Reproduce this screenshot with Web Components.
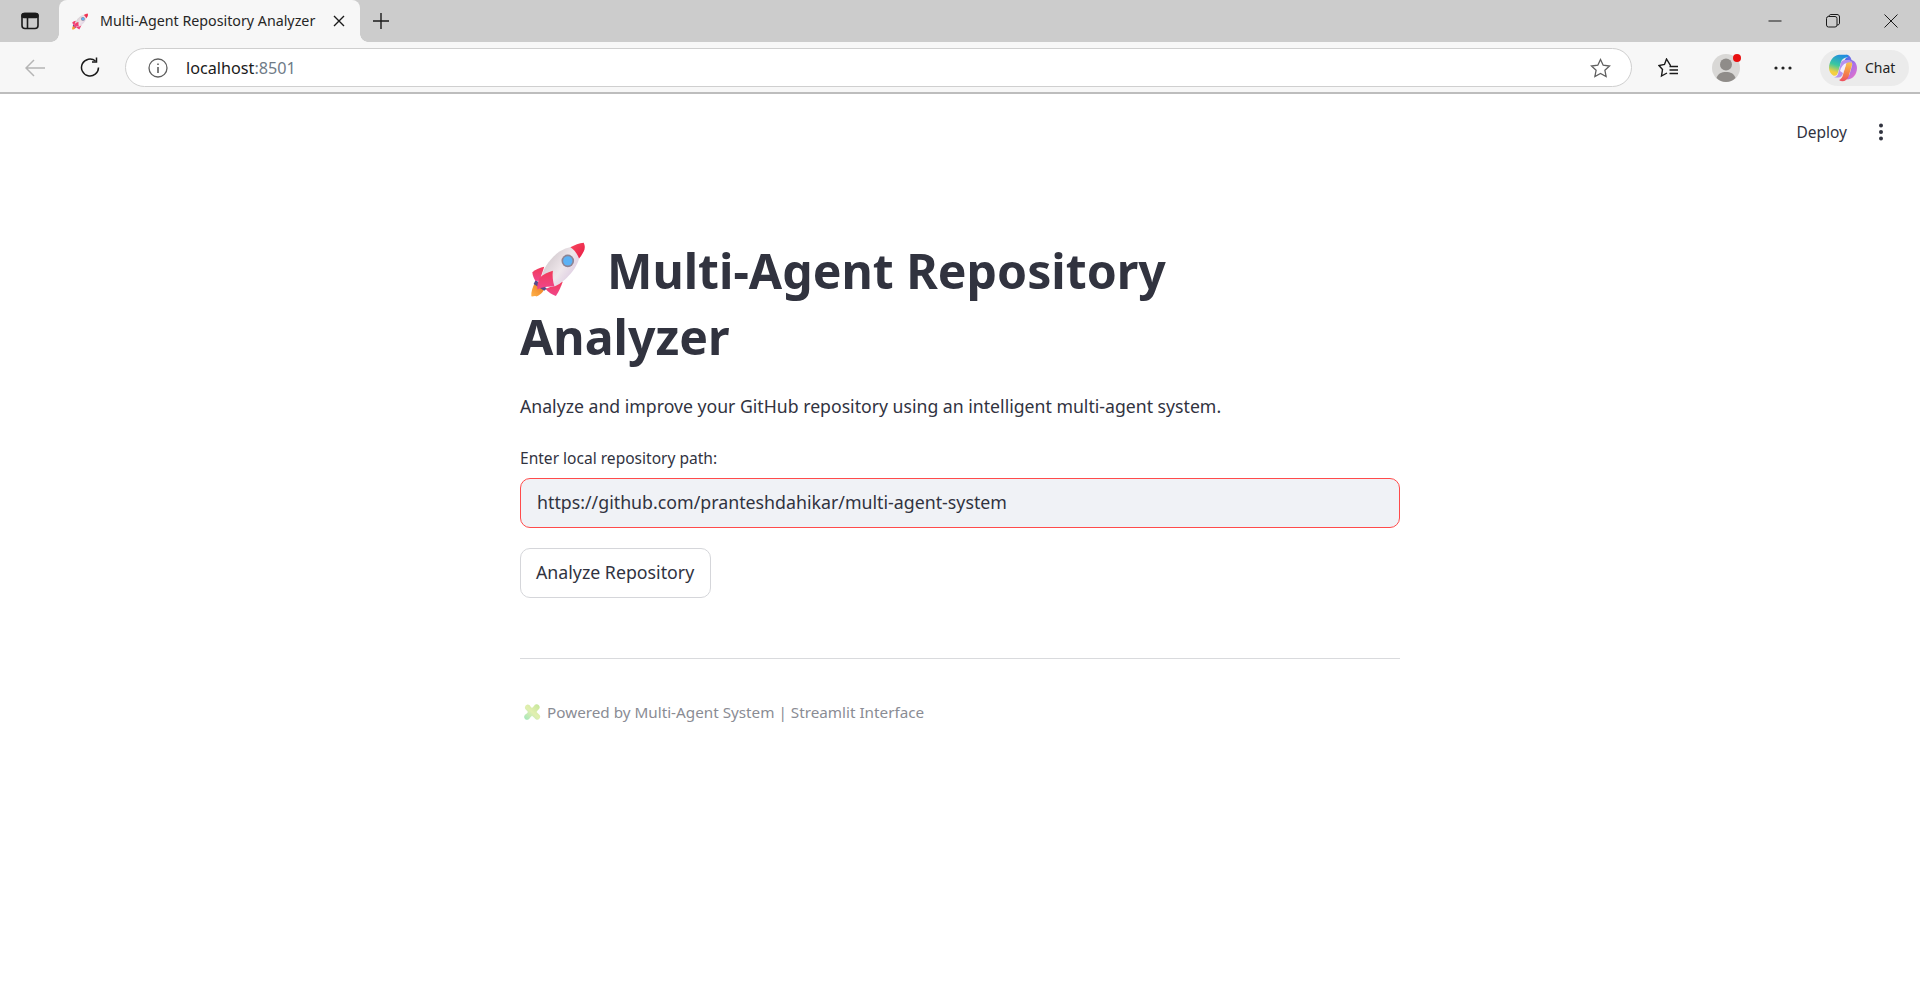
<!DOCTYPE html>
<html lang="en">
<head>
<meta charset="utf-8">
<title>Multi-Agent Repository Analyzer</title>
<style>
  html, body { margin: 0; height: 100%; background: #fff; overflow: hidden; }
  body { display: flex; flex-direction: column; font-family: "Noto Sans", "Liberation Sans", sans-serif; }
</style>
</head>
<body>
<browser-frame url-host="localhost" url-port=":8501" tab-title="Multi-Agent Repository Analyzer"></browser-frame>
<app-page>
  <app-header slot="header"></app-header>
  <app-title>Multi-Agent Repository<br>Analyzer</app-title>
  <app-text>Analyze and improve your GitHub repository using an intelligent multi-agent system.</app-text>
  <path-input label="Enter local repository path:" value="https://github.com/pranteshdahikar/multi-agent-system"></path-input>
  <app-button>Analyze Repository</app-button>
  <app-footer>Powered by Multi-Agent System | Streamlit Interface</app-footer>
</app-page>

<script>
const ROCKET = `
  <svg viewBox="20 10 175 172" width="100%" height="100%" aria-hidden="true">
    <defs>
      <linearGradient id="body" x1="0.1" y1="0.2" x2="0.9" y2="0.8">
        <stop offset="0" stop-color="#cfc6cb"/><stop offset="0.55" stop-color="#efe7eb"/><stop offset="1" stop-color="#d9c6e0"/>
      </linearGradient>
      <linearGradient id="nose" x1="0" y1="0" x2="1" y2="1">
        <stop offset="0" stop-color="#f8485f"/><stop offset="1" stop-color="#e81c44"/>
      </linearGradient>
      <linearGradient id="fin" x1="0.5" y1="0" x2="0.5" y2="1">
        <stop offset="0" stop-color="#f23a58"/><stop offset="1" stop-color="#f0468c"/>
      </linearGradient>
      <linearGradient id="flame" x1="1" y1="0" x2="0" y2="1">
        <stop offset="0" stop-color="#e8781e"/><stop offset="1" stop-color="#ffb24a"/>
      </linearGradient>
    </defs>
    <path d="M38 136 C31 148 26 164 27 177 C33 178 37 174 41 177 C47 178 50 172 55 170 C60 167 64 160 66 154 Z" fill="url(#flame)"/>
    <path d="M40 128 L74 153 L66 160 L34 140 Z" fill="#574a8c"/>
    <path d="M30 104 C40 96 54 91 66 88 L52 130 L40 131 C34 122 31 113 30 104 Z" fill="url(#fin)"/>
    <path d="M122 132 C116 148 110 163 101 176 C90 172 78 165 70 155 Z" fill="url(#fin)"/>
    <path d="M58 124 C58 96 86 60 112 42 C124 34 136 30 146 28 C158 36 166 48 171 62 C166 90 130 132 100 146 C92 149 82 150 76 148 Z" fill="url(#body)"/>
    <path d="M145 29 C157 22 172 16 185 15 C190 24 189 34 185 42 C181 50 176 57 171 63 C166 49 157 37 145 29 Z" fill="url(#nose)"/>
    <circle cx="137" cy="70" r="19" fill="#8d8494"/>
    <circle cx="137" cy="70" r="14" fill="#5cb2f5"/>
    <path d="M92 100 C78 104 62 112 52 121 C47 132 44 144 45 156 C62 148 80 146 97 148 C92 132 90 116 92 100 Z" fill="url(#fin)"/>
  </svg>`;

class BrowserFrame extends HTMLElement {
  constructor() {
    super();
    this.attachShadow({ mode: "open" });
  }
  connectedCallback() {
    this.shadowRoot.innerHTML = `
      <style>
        :host { display: block; flex: none; font-family: "Noto Sans", "Open Sans", sans-serif; color: #1f1f1f; }
        .strip { height: 42px; background: #cccccc; display: flex; align-items: stretch; }
        .side { width: 59px; display: flex; align-items: center; justify-content: center; box-sizing: border-box; }
        .tab { width: 301px; background: #f7f7f7; border-radius: 8px 8px 0 0; display: flex; align-items: center; position: relative; padding: 0 15px 0 12px; box-sizing: border-box; }
        .tab::before, .tab::after { content: ""; position: absolute; bottom: 0; width: 8px; height: 8px; background: radial-gradient(circle at 0 0, #cccccc 7.5px, #f7f7f7 8px); }
        .tab::before { left: -8px; }
        .tab::after { right: -8px; transform: scaleX(-1); }
        .fav { width: 18px; height: 17px; flex: none; }
        .title { margin-left: 11px; font-size: 14.25px; white-space: nowrap; flex: 1; color: #262626; position: relative; top: -1px; }
        .new { width: 42px; display: flex; align-items: center; justify-content: center; }
        .grow { flex: 1; }
        .win { display: flex; }
        .win div { width: 58px; display: flex; align-items: center; justify-content: center; }
        .bar { height: 52px; box-sizing: border-box; background: #f7f7f7; display: flex; align-items: center; border-bottom: 2px solid #bdbdbd; padding: 1px 11px 0 15px; }
        .nav { width: 40px; display: flex; align-items: center; justify-content: center; }
        .nav + .nav { margin-left: 15px; }
        .addr { flex: 1; height: 39px; margin-left: 15px; box-sizing: border-box; background: #fff; border: 1px solid #cfcfcf; border-radius: 20px; display: flex; align-items: center; padding: 0 20px 0 22px; font-size: 16.2px; }
        .host { margin-left: 18px; color: #1a1a1a; }
        .port { color: #6f7b87; flex: 1; }
        .tools { display: flex; align-items: center; margin-left: 8px; }
        .tool { width: 57.5px; display: flex; align-items: center; justify-content: center; position: relative; }
        .chat { display: flex; align-items: center; height: 36px; width: 89px; margin-left: 8px; background: #ebebeb; border-radius: 18px; box-sizing: border-box; padding-left: 9px; font-size: 14px; }
        .chat span { margin-left: 8px; }
        .dot { position: absolute; width: 8px; height: 8px; border-radius: 50%; background: #e81010; }
      </style>
      <div class="strip">
        <div class="side">
          <svg width="18" height="18" viewBox="0 0 18 18" fill="none" stroke="#1a1a1a" stroke-width="1.6"><rect x="1" y="1.5" width="16" height="15" rx="3"/><path d="M6.5 5.5V16.5" /><rect x="1" y="1.5" width="16" height="4" rx="2" fill="#1a1a1a"/></svg>
        </div>
        <div class="tab">
          <div class="fav">${ROCKET.replace(/id="/g, 'id="t').replace(/url\(#/g, "url(#t")}</div>
          <div class="title">${this.getAttribute("tab-title")}</div>
          <svg width="12" height="12" viewBox="0 0 12 12" stroke="#1a1a1a" stroke-width="1.4"><path d="M1 1L11 11M11 1L1 11"/></svg>
        </div>
        <div class="new">
          <svg width="18" height="18" viewBox="0 0 18 18" stroke="#1a1a1a" stroke-width="1.4"><path d="M9 1V17M1 9H17"/></svg>
        </div>
        <div class="grow"></div>
        <div class="win">
          <div><svg width="14" height="14" viewBox="0 0 14 14" stroke="#1a1a1a"><path d="M0.5 7H13.5"/></svg></div>
          <div><svg width="14" height="14" viewBox="0 0 14 14" fill="none" stroke="#1a1a1a"><rect x="0.5" y="2.5" width="10.5" height="10.5" rx="2"/><path d="M3 2.5C3 1.2 3.8 0.5 5 0.5H11C12.5 0.5 13.5 1.5 13.5 3V9C13.5 10.2 12.8 11 11 11"/></svg></div>
          <div><svg width="14" height="14" viewBox="0 0 14 14" stroke="#1a1a1a"><path d="M0.5 0.5L13.5 13.5M13.5 0.5L0.5 13.5"/></svg></div>
        </div>
      </div>
      <div class="bar">
        <div class="nav"><svg width="20" height="18" viewBox="0 0 20 18" fill="none" stroke="#b5b5b5" stroke-width="1.5"><path d="M1 9H20M9 1L1 9L9 17"/></svg></div>
        <div class="nav"><svg width="21" height="21" viewBox="0 0 21 21" fill="none" stroke="#1a1a1a" stroke-width="1.5"><path d="M18.5 10.5A8.5 8.5 0 1 1 15.5 4"/><path d="M16.5 0.5V5H12"/></svg></div>
        <div class="addr">
          <svg width="20" height="20" viewBox="0 0 20 20" fill="none" stroke="#5f5f5f" stroke-width="1.3"><circle cx="10" cy="10" r="9"/><path d="M10 9V15M10 5.5V7" stroke-width="1.6"/></svg>
          <span class="host">${this.getAttribute("url-host")}</span><span class="port">${this.getAttribute("url-port")}</span>
          <svg width="21" height="20" viewBox="0 0 21 20" fill="none" stroke="#5f5f5f" stroke-width="1.3"><path d="M10.5 1.5L13.2 7.2L19.5 8L14.9 12.3L16.1 18.5L10.5 15.4L4.9 18.5L6.1 12.3L1.5 8L7.8 7.2Z"/></svg>
        </div>
        <div class="tools">
          <div class="tool"><svg width="21" height="20" viewBox="0 0 21 20" fill="none" stroke="#1a1a1a" stroke-width="1.4"><path d="M13 7.5H12.5L8.5 1L6.5 6.5L1 7.5L4.5 11.5L3.5 18L9 15"/><path d="M11.5 8.5H20M11.5 12H20M11.5 15.5H20"/></svg></div>
          <div class="tool">
            <div style="position:relative;width:28px;height:28px">
              <svg width="28" height="28" viewBox="0 0 28 28"><circle cx="14" cy="14" r="14" fill="#d9d8d6"/><circle cx="14" cy="10.5" r="6" fill="#8f8c89"/><path d="M4.5 24C6 19.5 9.5 18 14 18S22 19.5 23.5 24C21 26.5 17.5 28 14 28S7 26.5 4.5 24Z" fill="#8f8c89"/></svg>
              <div class="dot" style="left:21px;top:0"></div>
            </div>
          </div>
          <div class="tool"><svg width="18" height="4" viewBox="0 0 18 4" fill="#222"><circle cx="2" cy="2" r="1.6"/><circle cx="9" cy="2" r="1.6"/><circle cx="16" cy="2" r="1.6"/></svg></div>
          <div class="chat">
            <svg width="28" height="28" viewBox="0 0 28 28">
              <defs>
                <linearGradient id="c1" x1="0.6" y1="0" x2="0.3" y2="1"><stop offset="0" stop-color="#1f8de0"/><stop offset="0.5" stop-color="#3ac8a0"/><stop offset="0.85" stop-color="#f5d040"/></linearGradient>
                <linearGradient id="c2" x1="0.2" y1="0" x2="0.8" y2="1"><stop offset="0" stop-color="#3a6ae8"/><stop offset="0.45" stop-color="#a070ea"/><stop offset="1" stop-color="#ea70c8"/></linearGradient>
                <linearGradient id="c3" x1="0.5" y1="0" x2="0.4" y2="1"><stop offset="0" stop-color="#f7c948"/><stop offset="0.55" stop-color="#f5813f"/><stop offset="1" stop-color="#ef4a5a"/></linearGradient>
              </defs>
              <path d="M10 0.8H18C19.8 0.8 20 2.6 18.5 3.2C15 3.6 13 5 12 8L9 18.5C8.2 21 6.5 22.5 4.2 21.5C1.6 20 0 17 0 14C0 8 4 1.3 10 0.8Z" fill="url(#c1)"/>
              <path d="M16.5 0.8C19.5 0.8 21.8 2.5 22.6 6C25.8 6.8 28 10 28 14C28 20 24.2 25 19 25.4C17.2 25.4 16.8 24 18 23.2C19.5 22.8 20.2 21.3 20.8 19.5L23.2 11C23.8 8.2 21.4 6.4 19 6.4H15.5C16.5 4.5 17.2 3.6 18.5 3.2C20 2.6 19 0.8 16.5 0.8Z" fill="url(#c2)"/>
              <path d="M14.5 8.2C16.5 9.2 17 10.6 16.5 12.5L13.5 22.5C13 24 11.5 25.4 10 26C12 27.7 15 27.7 17 26C18.6 25 19.6 23 20.2 20.5L23 11C23.3 9.6 22.9 8 22 7Z" fill="url(#c3)" opacity="0.95"/>
              <path d="M12 8.5C13 6.5 14.8 6 17 6H19C21 6 22.6 7 23 9C21 7.6 18 7.8 16.5 10.5L13.5 20.5C13 22 11.5 23.6 9.5 23.6H5C7 23.2 8.5 21.5 9 20Z" fill="#b692ee"/>
              <path d="M11 17C12 13 14 10 17.5 9L16.5 12 14 19Z" fill="#fff" opacity="0.85"/>
            </svg>
            <span>Chat</span>
          </div>
        </div>
      </div>`;
  }
}
customElements.define("browser-frame", BrowserFrame);

class AppPage extends HTMLElement {
  constructor() {
    super();
    this.attachShadow({ mode: "open" }).innerHTML = `
      <style>
        :host { display: block; flex: 1; min-height: 0; background: #fff; color: #31333f; font-family: "Noto Sans", "Liberation Sans", sans-serif; }
        main { width: 880px; margin: 0 auto; display: flex; flex-direction: column; }
      </style>
      <slot name="header"></slot>
      <main><slot></slot></main>`;
  }
}
customElements.define("app-page", AppPage);

class AppHeader extends HTMLElement {
  constructor() {
    super();
    this.attachShadow({ mode: "open" }).innerHTML = `
      <style>
        :host { display: flex; justify-content: flex-end; align-items: center; height: 76px; padding-right: 36px; box-sizing: border-box; font-size: 15.5px; color: #31333f; }
        .deploy { margin-right: 31px; }
        svg { display: block; }
      </style>
      <span class="deploy">Deploy</span>
      <svg width="6" height="18" viewBox="0 0 6 18" fill="#31333f"><circle cx="3" cy="2.5" r="2"/><circle cx="3" cy="9" r="2"/><circle cx="3" cy="15.5" r="2"/></svg>`;
  }
}
customElements.define("app-header", AppHeader);

class AppTitle extends HTMLElement {
  constructor() {
    super();
    this.attachShadow({ mode: "open" }).innerHTML = `
      <style>
        :host { display: block; margin-top: 67px; font-size: 48.2px; line-height: 66px; font-weight: 700; color: #31333f; }
        .rocket { display: inline-block; width: 58px; height: 57px; margin: 0 20px 0 9px; vertical-align: -9px; }
      </style>
      <span class="rocket">${ROCKET}</span><slot></slot>`;
  }
}
customElements.define("app-title", AppTitle);

class AppText extends HTMLElement {
  constructor() {
    super();
    this.attachShadow({ mode: "open" }).innerHTML = `
      <style>:host { display: block; margin-top: 21px; font-size: 17.66px; line-height: 32px; color: #31333f; }</style>
      <slot></slot>`;
  }
}
customElements.define("app-text", AppText);

class PathInput extends HTMLElement {
  constructor() {
    super();
    this.attachShadow({ mode: "open" });
  }
  connectedCallback() {
    this.shadowRoot.innerHTML = `
      <style>
        :host { display: block; margin-top: 24px; }
        label { display: block; font-size: 15.55px; line-height: 24px; color: #31333f; margin-bottom: 8px; }
        .box { height: 50px; box-sizing: border-box; border: 1px solid #ff4b4b; border-radius: 10px; background: #f0f2f6; display: flex; align-items: center; padding: 0 16px 2px; font-size: 17.77px; color: #31333f; }
      </style>
      <label>${this.getAttribute("label")}</label>
      <div class="box">${this.getAttribute("value")}</div>`;
  }
}
customElements.define("path-input", PathInput);

class AppButton extends HTMLElement {
  constructor() {
    super();
    this.attachShadow({ mode: "open" }).innerHTML = `
      <style>
        :host { display: inline-flex; align-self: flex-start; margin-top: 20px; height: 50px; box-sizing: border-box; align-items: center; padding: 0 16px 2px 15px; border: 1px solid #d5d6da; border-radius: 10px; font-size: 17.75px; color: #31333f; background: #fff; }
      </style>
      <slot></slot>`;
  }
}
customElements.define("app-button", AppButton);

class AppFooter extends HTMLElement {
  constructor() {
    super();
    this.attachShadow({ mode: "open" }).innerHTML = `
      <style>
        :host { display: block; margin-top: 60px; border-top: 1px solid #d9dadd; padding-top: 41px; font-size: 15.25px; line-height: 24px; color: #8a8c94; }
        .row { display: flex; align-items: center; }
        svg { margin: 0 6px 0 3px; flex: none; }
      </style>
      <div class="row">
        <svg width="18" height="18" viewBox="0 0 18 18">
          <defs><linearGradient id="pz" gradientUnits="userSpaceOnUse" x1="16" y1="1" x2="2" y2="17"><stop offset="0" stop-color="#c4e69a"/><stop offset="0.5" stop-color="#e2efb0"/><stop offset="1" stop-color="#a2e6bc"/></linearGradient></defs>
          <path fill="url(#pz)" d="M4.5 1.5A3 3 0 0 1 7.5 3.6L9 5L11 3A3 3 0 1 1 15 7L13.5 9L15.5 11A3 3 0 1 1 11.5 15L9 12.8L7 14.8A3 3 0 1 1 3.2 11L5 9L3 6.8A3 3 0 0 1 4.5 1.5Z"/>
        </svg>
        <span><slot></slot></span>
      </div>`;
  }
}
customElements.define("app-footer", AppFooter);
</script>
</body>
</html>
